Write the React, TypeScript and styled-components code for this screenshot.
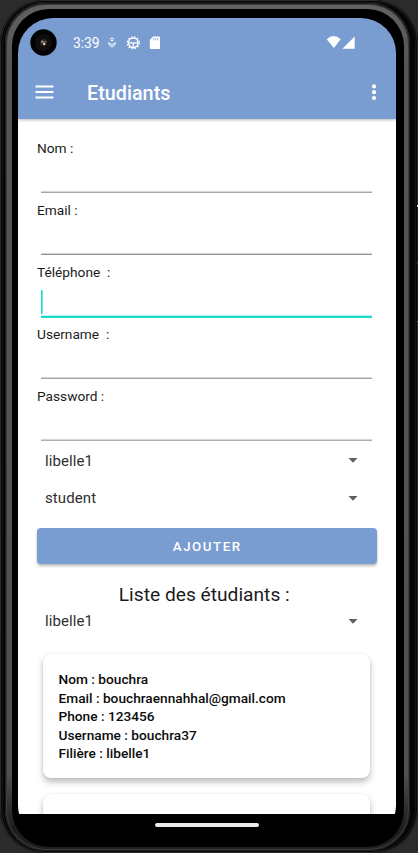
import React from "react";
import styled, { createGlobalStyle } from "styled-components";

const Global = createGlobalStyle`
  * { box-sizing: border-box; }
  body { margin: 0; background: #2b2b2b; font-family: Roboto, sans-serif; overflow: hidden; }
`;

const Shell = styled.div`
  position: relative;
  width: 418px;
  height: 853px;
  padding: 3px 8px 2px 5px;
  border-radius: 44px;
  background: #050505;
  box-shadow: inset 0 0 0 1px #292929, inset 0 0 0 2px #080808, inset 0 0 0 3px #141414;
`;

const SideKey = styled.i<{ $top: number; $height: number; $edge: string }>`
  position: absolute;
  right: 0;
  top: ${(p) => p.$top}px;
  width: 1px;
  height: ${(p) => p.$height}px;
  background: #1c1c1c;
  border-top: 2px solid ${(p) => p.$edge};
  border-bottom: 1px solid #777;
`;

const Rim = styled.div`
  height: 848px;
  padding: 6px 6px 4px 7px;
  border-radius: 41px;
  background: linear-gradient(#626262 0, #555 60px, #505050 770px, #1c1c1c 825px, #202020 100%);
  box-shadow: inset 0 0 0 1px #1c1c1c, inset 0 0 0 2px #3c3c3c;
`;

const Bezel = styled.div`
  height: 838px;
  padding: 9px 8px 14px 6px;
  border-radius: 37px;
  background: #000;
`;

const Screen = styled.div`
  width: 378px;
  height: 817px;
  display: flex;
  flex-direction: column;
  border-radius: 35px 35px 29px 29px;
  overflow: hidden;
  background: #000;
`;

const Header = styled.header`
  height: 101px;
  flex: none;
  background: #799cd1;
  color: #fff;
  position: relative;
  box-shadow: 0 1px 3px rgba(0, 0, 0, 0.28);
`;

const StatusBar = styled.div`
  display: flex;
  align-items: center;
  height: 49px;
  padding: 0 41px 0 12px;
`;

const Clock = styled.span`
  margin-left: 16px;
  width: 34px;
  font-size: 13.8px;
  line-height: 16px;
`;

const Signals = styled.div`
  display: flex;
  margin-left: auto;
`;

const Toolbar = styled.div`
  display: flex;
  align-items: center;
  height: 52px;
  padding: 0 19px 2px 17px;
`;

const Title = styled.h1`
  flex: 1;
  margin: 4px 0 0 33px;
  font-size: 19.8px;
  line-height: 24px;
  font-weight: 500;
`;

const Content = styled.main`
  height: 694.5px;
  flex: none;
  padding: 17px 20px 0 19px;
  background: #fff;
  overflow: hidden;
`;

const Field = styled.label`
  display: block;
  height: 62px;
  font-size: 13.7px;
  line-height: 24px;
  color: #1b1b1b;
  white-space: pre;
`;

const Entry = styled.div<{ $active?: boolean; $tone?: string }>`
  display: flex;
  align-items: flex-end;
  height: ${(p) => (p.$active ? 34 : 33)}px;
  margin: 0 4px;
  padding-bottom: ${(p) => (p.$active ? 2 : 0)}px;
  border-bottom: ${(p) => (p.$active ? "2px solid #19dccb" : `1px solid ${p.$tone ?? "#a4a4a4"}`)};
  box-shadow: ${(p) => (p.$active ? "inset 0 -1px #b5f4ef" : "inset 0 -1px #d6d6d6")};
`;

const Caret = styled.span`
  width: 2px;
  height: 24px;
  background: linear-gradient(90deg, #1bd7c7 50%, #6ce8df 50%);
`;

const Picker = styled.div<{ $height: number }>`
  display: flex;
  align-items: center;
  justify-content: space-between;
  height: ${(p) => p.$height}px;
  padding: 0 18px 0 8px;
  font-size: 15px;
  letter-spacing: 0.1px;
  color: #303030;
`;

const AddButton = styled.button`
  display: block;
  width: 339.5px;
  height: 35.5px;
  margin: 7px 0 0;
  padding: 2px 0 0 1px;
  border: 0;
  border-radius: 4px;
  background: #799cd1;
  color: #fff;
  font: 500 13.3px/20px Roboto, sans-serif;
  letter-spacing: 1.55px;
  box-shadow: 0 2px 3px rgba(0, 0, 0, 0.28);
`;

const ListTitle = styled.h2`
  margin: 18.5px 0 0;
  padding-right: 4.5px;
  height: 26px;
  font-size: 19.2px;
  line-height: 26px;
  font-weight: 400;
  text-align: center;
  color: #1b1b1b;
`;

const Card = styled.article`
  height: 124px;
  margin: 0 6.5px 16px 6px;
  padding: 16px 15.5px;
  border-radius: 8px;
  background: #fff;
  color: #0c0c0c;
  font-size: 13.7px;
  line-height: 18.6px;
  font-weight: 500;
  box-shadow: 0 4px 6px rgba(0, 0, 0, 0.26), 0 0 2px rgba(0, 0, 0, 0.09);
`;

const Cards = styled.section`
  padding-top: 20px;
`;

const Navigation = styled.nav`
  flex: 1;
  display: flex;
  justify-content: center;
  padding-top: 9px;
`;

const HomeHandle = styled.div`
  width: 104px;
  height: 4px;
  margin-right: 1px;
  border-radius: 3px;
  background: #eee9eb;
`;

const Arrow = () => (
  <svg width="10" height="5" viewBox="0 0 10 5"><path d="M.5 0h9L5 4.8Z" fill="#606060" /></svg>
);

const Camera = () => (
  <svg width="27" height="27" viewBox="0 0 27 27">
    <circle cx="13.5" cy="13.5" r="13.2" fill="#030303" />
    <circle cx="13.5" cy="13.5" r="8.5" fill="#0e0e0e" />
    <circle cx="13.5" cy="13.5" r="3.4" fill="#2b2522" />
    <circle cx="12.3" cy="12.7" r="1.3" fill="#a28674" />
    <circle cx="14.2" cy="14.9" r="1.3" fill="#d9bfa8" />
    <path d="M14.5 12h2v1h-2z" fill="#777" />
  </svg>
);

const StatusIcons = () => (
  <svg width="54" height="14" viewBox="107 36 54 14" fill="none" stroke="#fff">
    <circle cx="112" cy="39.4" r="1.5" strokeWidth="1" />
    <path d="m108.5 42.6 3.5 2.4 3.5-2.4v1.3l-3.5 3.3-3.5-3.3Z" strokeWidth="1" />
    <circle cx="133.3" cy="42.8" r="4.8" strokeWidth="1.4" />
    <circle cx="133.3" cy="42.8" r="6" strokeWidth="1.3" strokeDasharray="1.6 1.54" />
    <path d="M129 42.8h8.6M133.3 43v4.5" strokeWidth="1.3" />
    <path fill="#fff" stroke="none" d="M153.2 36.4h5.8a1 1 0 0 1 1 1v10.6a1 1 0 0 1-1 1h-8.2a1 1 0 0 1-1-1v-8.2Z" />
    <path stroke="#799cd1" d="M153.8 38v2.3M155.8 38v2.3M157.8 38v2.3" strokeWidth=".8" />
  </svg>
);

const fields = [
  { label: "Nom :", tone: "#a7a7a7" },
  { label: "Email :", tone: "#929292" },
  { label: "Téléphone  :", active: true },
  { label: "Username  :", tone: "#a4a4a4" },
  { label: "Password :", tone: "#b0b0b0" },
];

export default function App() {
  return (
    <>
      <Global />
      <Shell>
        <SideKey $top={205} $height={58} $edge="#cfcfcf" />
        <SideKey $top={262} $height={60} $edge="#4a4a4a" />
        <Rim>
          <Bezel>
            <Screen>
              <Header>
                <StatusBar>
                  <Camera />
                  <Clock>3:39</Clock>
                  <StatusIcons />
                  <Signals>
                    <svg width="29" height="14" viewBox="326 36 29 14" fill="#fff">
                      <path d="M326.7 39.3q7-6.4 14 0L333.8 48ZM354.7 36.5v12.2h-12.3Z" />
                    </svg>
                  </Signals>
                </StatusBar>
                <Toolbar>
                  <svg width="19" height="14" viewBox="0 0 19 14"><path d="M.5 1.5h18M.5 7h18M.5 12.5h18" stroke="#fff" strokeWidth="2" /></svg>
                  <Title>Etudiants</Title>
                  <svg width="6" height="18" viewBox="0 0 6 18" fill="#fff"><circle cx="3" cy="3.4" r="2.1" /><circle cx="3" cy="9.2" r="2.1" /><circle cx="3" cy="15" r="2.1" /></svg>
                </Toolbar>
              </Header>
              <Content>
                {fields.map((f) => (
                  <Field key={f.label}>
                    {f.label}
                    <Entry $active={f.active} $tone={f.tone}>{f.active && <Caret />}</Entry>
                  </Field>
                ))}
                <Picker $height={29}>libelle1<Arrow /></Picker>
                <Picker $height={46}>student<Arrow /></Picker>
                <AddButton>AJOUTER</AddButton>
                <ListTitle>Liste des étudiants :</ListTitle>
                <Picker $height={26}>libelle1<Arrow /></Picker>
                <Cards>
                  <Card>
                    <div>Nom : bouchra</div>
                    <div>Email : bouchraennahhal@gmail.com</div>
                    <div>Phone : 123456</div>
                    <div>Username : bouchra37</div>
                    <div>Filière : libelle1</div>
                  </Card>
                  <Card />
                </Cards>
              </Content>
              <Navigation><HomeHandle /></Navigation>
            </Screen>
          </Bezel>
        </Rim>
      </Shell>
    </>
  );
}
